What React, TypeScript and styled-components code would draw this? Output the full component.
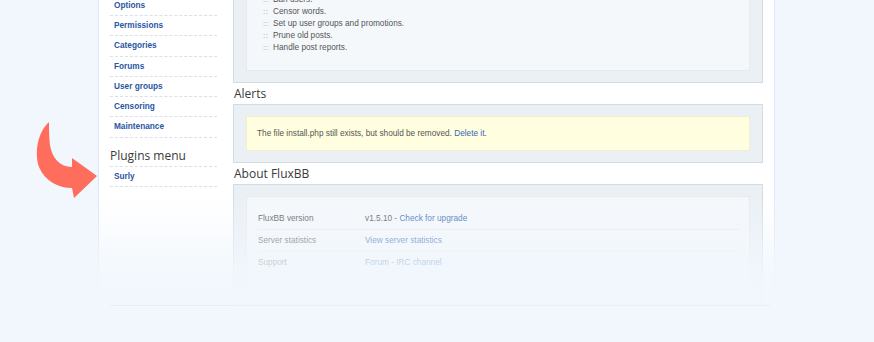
import React from "react";
import styled, { createGlobalStyle } from "styled-components";

const Global = createGlobalStyle`
  html, body { margin: 0; padding: 0; }
  body {
    background: #f1f7fd;
    font-family: "Liberation Sans", Arial, sans-serif;
    font-size: 8.25px;
    color: #555;
    overflow: hidden;
    height: 342px;
  }
`;

const Stage = styled.div`
  position: relative;
  width: 874px;
  height: 342px;
  overflow: hidden;
`;

const Page = styled.div`
  margin-left: 98px;
  width: 677px;
  height: 310px;
  box-sizing: border-box;
  background: #fff;
  border-left: 1px solid #dfe7ef;
  border-right: 1px solid #e2e9f1;
  padding: 0 11px;
  display: flex;
  gap: 16px;
  align-items: flex-start;
`;

const Sidebar = styled.div`
  width: 107px;
  flex: none;
  margin-top: -4.25px;
`;

const NavList = styled.ul`
  list-style: none;
  margin: 0;
  padding: 0;
`;

const NavItem = styled.li`
  height: 19.25px;
  line-height: 19.25px;
  border-bottom: 1px dashed #d9e0e8;
  padding-left: 4px;
  font-weight: bold;
  a {
    color: #2a56a2;
    text-decoration: none;
  }
`;

const SideHeading = styled.h3`
  margin: 0;
  font-family: "Open Sans", "DejaVu Sans", sans-serif;
  font-weight: normal;
  font-size: 12px;
  color: #3a3a3a;
  height: 20.5px;
  line-height: 20px;
  padding-top: 8px;
  border-bottom: 1px dashed #d9e0e8;
`;

const Main = styled.div`
  width: 530px;
  flex: none;
  margin-top: -29px;
`;

const Panel = styled.div`
  background: #ebf0f5;
  border: 1px solid #d3dce5;
  padding: 11px 12px;
`;

const Inner = styled.div<{ $tone?: "note" }>`
  background: ${(p) => (p.$tone === "note" ? "#ffffe0" : "#f5f8fb")};
  border: 1px solid ${(p) => (p.$tone === "note" ? "#efefcf" : "#e5ebf1")};
`;

const Bullets = styled.ul`
  list-style: none;
  margin: 0;
  padding: 10px 0 16px 16px;
  li {
    line-height: 12px;
    color: #555;
  }
  li::before {
    content: "::";
    display: inline-block;
    width: 10px;
    color: #8592a2;
    font-size: 8px;
    letter-spacing: 0.5px;
  }
`;

const Heading = styled.h2`
  margin: 0;
  font-family: "Open Sans", "DejaVu Sans", sans-serif;
  font-weight: normal;
  font-size: 12px;
  color: #3a3a3a;
  height: 21px;
  line-height: 21px;
  padding-left: 1px;
`;

const Note = styled.p`
  margin: 0;
  padding: 0 10px;
  height: 33px;
  line-height: 33px;
  color: #555;
  a { color: #3568b8; text-decoration: none; }
`;

const InfoTable = styled.div`
  padding: 11px 10px 30px 10px;
`;

const InfoRow = styled.div`
  display: flex;
  height: 21px;
  line-height: 21px;
  border-bottom: 1px solid #e6ecf2;
  padding-left: 1px;
`;

const InfoLabel = styled.div`
  width: 107px;
  color: #555;
`;

const InfoValue = styled.div`
  color: #555;
  a { color: #3568b8; text-decoration: none; }
`;

const Fade = styled.div`
  position: absolute;
  left: 0;
  right: 0;
  top: 196px;
  bottom: 0;
  pointer-events: none;
  background: linear-gradient(
    to bottom,
    rgba(241, 247, 253, 0) 0px,
    rgba(241, 247, 253, 0.55) 50px,
    rgba(241, 247, 253, 0.9) 80px,
    rgba(241, 247, 253, 0.97) 105px,
    #f1f7fd 112px
  );
`;

const FooterLine = styled.div`
  position: absolute;
  left: 110px;
  width: 660px;
  top: 305px;
  height: 1px;
  background: #e6eef6;
`;

const ArrowMark = styled.svg`
  position: absolute;
  left: 30px;
  top: 115px;
`;

export default function App() {
  const nav = ["Options", "Permissions", "Categories", "Forums", "User groups", "Censoring", "Maintenance"];
  const tasks = ["Ban users.", "Censor words.", "Set up user groups and promotions.", "Prune old posts.", "Handle post reports."];
  return (
    <Stage>
      <Global />
      <Page>
        <Sidebar>
          <NavList>
            {nav.map((n) => (
              <NavItem key={n}><a href="#">{n}</a></NavItem>
            ))}
          </NavList>
          <SideHeading>Plugins menu</SideHeading>
          <NavList>
            <NavItem><a href="#">Surly</a></NavItem>
          </NavList>
        </Sidebar>
        <Main>
          <Panel>
            <Inner>
              <Bullets>
                {tasks.map((t) => (
                  <li key={t}>{t}</li>
                ))}
              </Bullets>
            </Inner>
          </Panel>
          <Heading>Alerts</Heading>
          <Panel>
            <Inner $tone="note">
              <Note>
                The file install.php still exists, but should be removed. <a href="#">Delete it</a>.
              </Note>
            </Inner>
          </Panel>
          <Heading>About FluxBB</Heading>
          <Panel>
            <Inner>
              <InfoTable>
                <InfoRow>
                  <InfoLabel>FluxBB version</InfoLabel>
                  <InfoValue>v1.5.10 - <a href="#">Check for upgrade</a></InfoValue>
                </InfoRow>
                <InfoRow>
                  <InfoLabel>Server statistics</InfoLabel>
                  <InfoValue><a href="#">View server statistics</a></InfoValue>
                </InfoRow>
                <InfoRow>
                  <InfoLabel>Support</InfoLabel>
                  <InfoValue><a href="#">Forum</a> - <a href="#">IRC channel</a></InfoValue>
                </InfoRow>
              </InfoTable>
            </Inner>
          </Panel>
        </Main>
      </Page>
      <Fade />
      <FooterLine />
      <ArrowMark width="70" height="90" viewBox="30 115 70 90">
        <path
          d="M49,122 C38,132 34,152 39,167 C45,181 58,188 72,188 L74,198 L97,176 L72,158 L72,167 C60,167 52,158 50,145 C49,135 49,128 49,122 Z"
          fill="#ff6d5c"
        />
      </ArrowMark>
    </Stage>
  );
}
